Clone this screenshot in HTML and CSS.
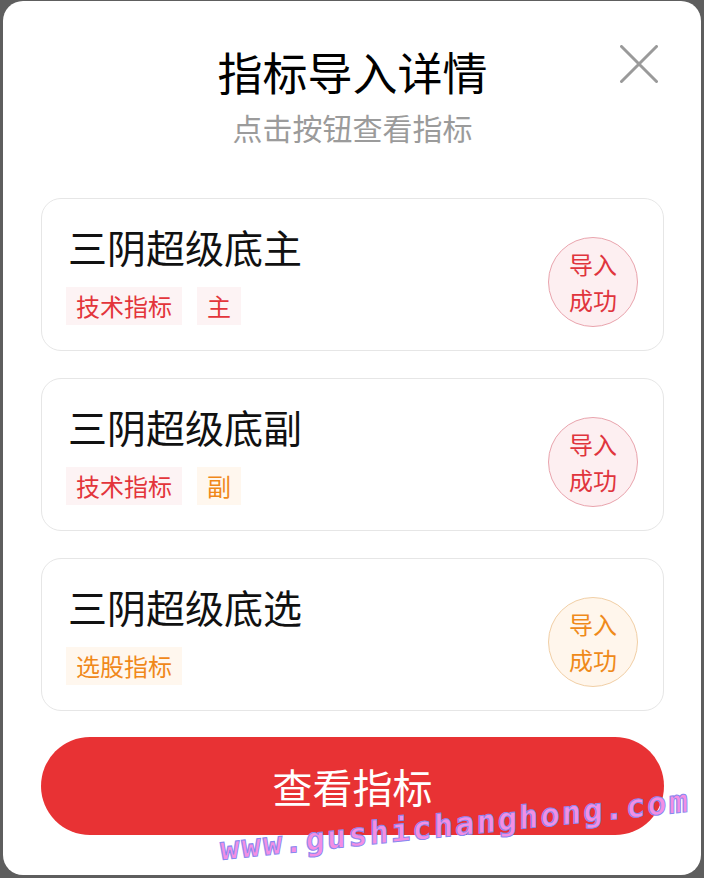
FILE: index.html
```html
<!DOCTYPE html>
<html lang="zh-CN">
<head>
  <meta charset="UTF-8">
  <title>指标导入详情</title>
  <link rel="stylesheet" href="styles.css">
</head>
<body>

  <div class="modal">
    <button class="close-btn" aria-label="关闭">
      <svg width="38" height="38" viewBox="0 0 38 38">
        <path d="M1.5 1.5 L36.5 36.5 M36.5 1.5 L1.5 36.5" stroke="#9a9a9a" stroke-width="3" stroke-linecap="round" fill="none"/>
      </svg>
    </button>

    <div class="header">
      <h2 class="title">指标导入详情</h2>
      <p class="subtitle">点击按钮查看指标</p>
    </div>

    <ul class="card-list">
      <li class="card">
        <div class="card-info">
          <div class="card-name">三阴超级底主</div>
          <div class="tags">
            <span class="tag tag-red">技术指标</span>
            <span class="tag tag-red">主</span>
          </div>
        </div>
        <div class="badge badge-red">导入<br>成功</div>
      </li>
      <li class="card">
        <div class="card-info">
          <div class="card-name">三阴超级底副</div>
          <div class="tags">
            <span class="tag tag-red">技术指标</span>
            <span class="tag tag-orange">副</span>
          </div>
        </div>
        <div class="badge badge-red">导入<br>成功</div>
      </li>
      <li class="card">
        <div class="card-info">
          <div class="card-name">三阴超级底选</div>
          <div class="tags">
            <span class="tag tag-orange">选股指标</span>
          </div>
        </div>
        <div class="badge badge-orange">导入<br>成功</div>
      </li>
    </ul>

    <button class="view-btn">查看指标</button>

    <div class="watermark">www.gushichanghong.com</div>
  </div>

</body>
</html>
```

FILE: styles.css
```css
* {
  box-sizing: border-box;
  font-family: "Noto Sans CJK SC", "Noto Sans", sans-serif;
}

body {
  margin: 0;
  height: 878px;
  padding: 1px 3px 3px 3px;
  background: #5e5e5e;
  overflow: hidden;
}

.modal {
  position: relative;
  height: 874px;
  background: #ffffff;
  border-radius: 20px;
  padding: 45px 37px 0 38px;
  overflow: hidden;
}

/* ---------- header ---------- */
.header {
  text-align: center;
}

.title {
  margin: 0;
  font-size: 45px;
  line-height: 52px;
  font-weight: 400;
  color: #000;
}

.subtitle {
  margin: 11px 0 0;
  font-size: 30px;
  line-height: 36px;
  color: #9b9b9b;
}

.close-btn {
  position: absolute;
  top: 44px;
  right: 43px;
  padding: 0;
  border: none;
  background: none;
  width: 38px;
  height: 38px;
}

/* ---------- cards ---------- */
.card-list {
  list-style: none;
  margin: 53px 0 0;
  padding: 0;
  display: flex;
  flex-direction: column;
  gap: 27px;
}

.card {
  height: 153px;
  flex-shrink: 0;
  border: 1px solid #e6e6e6;
  border-radius: 20px;
  padding: 25px 25px 25px 24px;
  display: flex;
  justify-content: space-between;
}

.card-name {
  font-size: 39px;
  line-height: 44px;
  color: #111;
  padding-left: 2px;
}

.tags {
  display: flex;
  gap: 15px;
  margin-top: 19px;
}

.tag {
  height: 38px;
  line-height: 38px;
  padding: 0 10px;
  font-size: 24px;
}

.tag-red {
  background: #fdf3f4;
  color: #e3353b;
}

.tag-orange {
  background: #fff7ee;
  color: #f0881a;
}

.badge {
  align-self: flex-end;
  width: 90px;
  height: 90px;
  margin-bottom: -2px;
  border-radius: 50%;
  display: flex;
  align-items: center;
  justify-content: center;
  text-align: center;
  font-size: 24px;
  line-height: 36px;
}

.badge-red {
  background: #fdeff1;
  border: 1px solid #e9a4ad;
  color: #e0353d;
}

.badge-orange {
  background: #fff6ec;
  border: 1px solid #f1cfa6;
  color: #ef8a1a;
}

/* ---------- bottom button ---------- */
.view-btn {
  display: block;
  width: 100%;
  height: 98px;
  margin-top: 26px;
  border: none;
  border-radius: 49px;
  background: #e83234;
  color: #fff;
  font-size: 40px;
}

.watermark {
  position: absolute;
  left: 217px;
  top: 832px;
  line-height: 32px;
  transform: skewY(-5.9deg);
  transform-origin: 0 27px;
  font-family: "DejaVu Sans Mono", monospace;
  font-size: 32px;
  font-weight: bold;
  letter-spacing: 2.1px;
  color: #f48fe3;
  -webkit-text-stroke: 1px #8a88f0;
  white-space: nowrap;
  pointer-events: none;
}
```
